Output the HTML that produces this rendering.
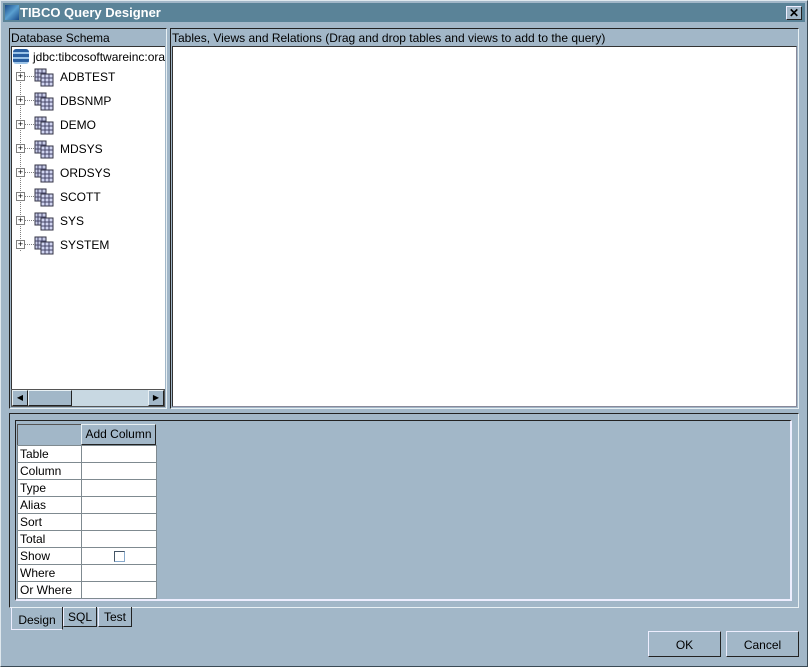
<!DOCTYPE html>
<html><head><style>
*{margin:0;padding:0;box-sizing:border-box}
body{width:808px;height:667px;background:#a2b7c8;font-family:"Liberation Sans",sans-serif;font-size:12px;color:#000;position:relative;overflow:hidden}
.a{position:absolute}
.t{font-size:12px;white-space:nowrap}
.node{position:absolute;left:16px;height:24px}
.node .pm{position:absolute;left:0;top:4px;width:9px;height:9px;border:1px solid #808080;background:#fff;font-size:9px;line-height:7px;text-align:center}
.node .dl{position:absolute;left:9px;top:8px;width:9px;border-top:1px dotted #808080}
.node .ic{position:absolute;left:18px;top:0}
.node .lb{position:absolute;left:44px;top:2px}
td{border:1px solid #7f8a90;height:17px;padding:0 2px;font-size:12px;background:#fff}
</style></head><body>
<div class="a" style="left:0;top:0;width:808px;height:667px;border:1px solid #dfe8ee;border-right-color:#3a4a55;border-bottom-color:#3a4a55"></div>
<!-- title -->
<div class="a" style="left:3px;top:3px;width:802px;height:19px;background:#5a8398"></div>
<div class="a" style="left:5px;top:5px;width:14px;height:15px;background:linear-gradient(135deg,#1a4a8a,#5aa0d0 50%,#1a4a8a)"></div>
<div class="a t" style="left:20px;top:5px;color:#fff;font-weight:bold;font-size:13px">TIBCO Query Designer</div>
<div class="a" style="left:786px;top:6px;width:16px;height:14px;background:#a2b7c8;border:1px solid #eef;border-right-color:#222;border-bottom-color:#222;text-align:center;font-size:12px;line-height:12px;font-weight:bold">✕</div>
<!-- left panel -->
<div class="a" style="left:9px;top:28px;width:158px;height:381px;border:1px solid #222;border-right-color:#e8f0f4;border-bottom-color:#e8f0f4"></div>
<div class="a t" style="left:11px;top:31px">Database Schema</div>
<div class="a" style="left:11px;top:46px;width:154px;height:343px;background:#fff;border-top:1px solid #333;border-left:1px solid #333;overflow:hidden">
 <div class="a" style="left:1px;top:2px;width:16px;height:15px;background:repeating-linear-gradient(#2a5fa0 0 3px,#9cc4e8 3px 5px);border-radius:3px"></div>
 <div class="a t" style="left:21px;top:3px">jdbc:tibcosoftwareinc:ora</div>
 <div class="a" style="left:8px;top:18px;height:186px;border-left:1px dotted #808080"></div>
</div>
<div id="tree" class="a" style="left:0;top:68px"></div>
<div class="a" style="left:11px;top:389px;width:154px;height:18px;background:#c8d8e2;border:1px solid #555"></div>
<div class="a" style="left:12px;top:390px;width:16px;height:16px;background:#a2b7c8;border:1px solid #e8f0f4;border-right-color:#222;border-bottom-color:#222;font-size:8px;text-align:center;line-height:14px">◀</div>
<div class="a" style="left:28px;top:390px;width:44px;height:16px;background:#a2b7c8;border:1px solid #e8f0f4;border-right-color:#222;border-bottom-color:#222"></div>
<div class="a" style="left:148px;top:390px;width:16px;height:16px;background:#a2b7c8;border:1px solid #e8f0f4;border-right-color:#222;border-bottom-color:#222;font-size:8px;text-align:center;line-height:14px">▶</div>
<!-- right panel -->
<div class="a" style="left:170px;top:28px;width:629px;height:381px;border:1px solid #222;border-right-color:#e8f0f4;border-bottom-color:#e8f0f4"></div>
<div class="a t" style="left:172px;top:31px">Tables, Views and Relations (Drag and drop tables and views to add to the query)</div>
<div class="a" style="left:172px;top:46px;width:625px;height:361px;background:#fff;border-top:1px solid #333;border-left:1px solid #333;border-right:1px solid #889;border-bottom:1px solid #889"></div>
<!-- bottom panel -->
<div class="a" style="left:9px;top:413px;width:790px;height:195px;border:1px solid #222;border-right-color:#e8f0f4;border-bottom-color:#e8f0f4"></div>
<div class="a" style="left:15px;top:420px;width:777px;height:181px;border:1px solid #222;border-right-color:#eef;border-bottom-color:#eef;border-right-width:2px;border-bottom-width:2px"></div>
<div class="a" style="left:17px;top:424px;width:64px;height:21px;border:1px solid #555;border-right:none;border-bottom:none"></div>
<div class="a t" style="left:81px;top:424px;width:75px;height:21px;background:#a2b7c8;border:1px solid #e8f0f4;border-right-color:#222;border-bottom-color:#222;text-align:center;line-height:19px">Add Column</div>
<table class="a" style="left:17px;top:445px;border-collapse:collapse">
<tr><td style="width:64px">Table</td><td style="width:75px"></td></tr>
<tr><td>Column</td><td></td></tr>
<tr><td>Type</td><td></td></tr>
<tr><td>Alias</td><td></td></tr>
<tr><td>Sort</td><td></td></tr>
<tr><td>Total</td><td></td></tr>
<tr><td>Show</td><td style="text-align:center"><div style="display:inline-block;width:11px;height:11px;border:1px solid #456;border-right-color:#8ac;border-bottom-color:#8ac;vertical-align:middle"></div></td></tr>
<tr><td>Where</td><td></td></tr>
<tr><td>Or Where</td><td></td></tr>
</table>
<!-- tabs -->
<div class="a t" style="left:11px;top:607px;width:52px;height:23px;border:1px solid #eef;border-top:none;border-right-color:#222;text-align:center;line-height:26px">Design</div>
<div class="a t" style="left:63px;top:607px;width:34px;height:20px;border:1px solid #222;border-top:none;border-left-color:#eef;text-align:center;line-height:20px">SQL</div>
<div class="a t" style="left:98px;top:607px;width:34px;height:20px;border:1px solid #222;border-top:none;border-left-color:#eef;text-align:center;line-height:20px">Test</div>
<!-- buttons -->
<div class="a t" style="left:648px;top:631px;width:73px;height:26px;border:1px solid #eef;border-right-color:#222;border-bottom-color:#222;text-align:center;line-height:26px">OK</div>
<div class="a t" style="left:726px;top:631px;width:73px;height:26px;border:1px solid #eef;border-right-color:#222;border-bottom-color:#222;text-align:center;line-height:26px">Cancel</div>
<script>
var n=["ADBTEST","DBSNMP","DEMO","MDSYS","ORDSYS","SCOTT","SYS","SYSTEM"],h="";
var ic='<svg width="22" height="20"><rect x="1" y="1" width="11" height="12" fill="#c8cce8" stroke="#334"/><rect x="7" y="6" width="12" height="12" fill="#d0d4f0" stroke="#334"/><path d="M4 1v12M8 1v5M1 5h11M1 9h6M11 6v12M15 6v12M7 10h12M7 14h12" stroke="#446" fill="none"/></svg>';
n.forEach(function(s,i){h+='<div class="node" style="top:'+(i*24)+'px"><div class="pm">+</div><div class="dl"></div><div class="ic">'+ic+'</div><div class="lb t">'+s+'</div></div>'});
document.getElementById('tree').innerHTML=h;
</script>
</body></html>
